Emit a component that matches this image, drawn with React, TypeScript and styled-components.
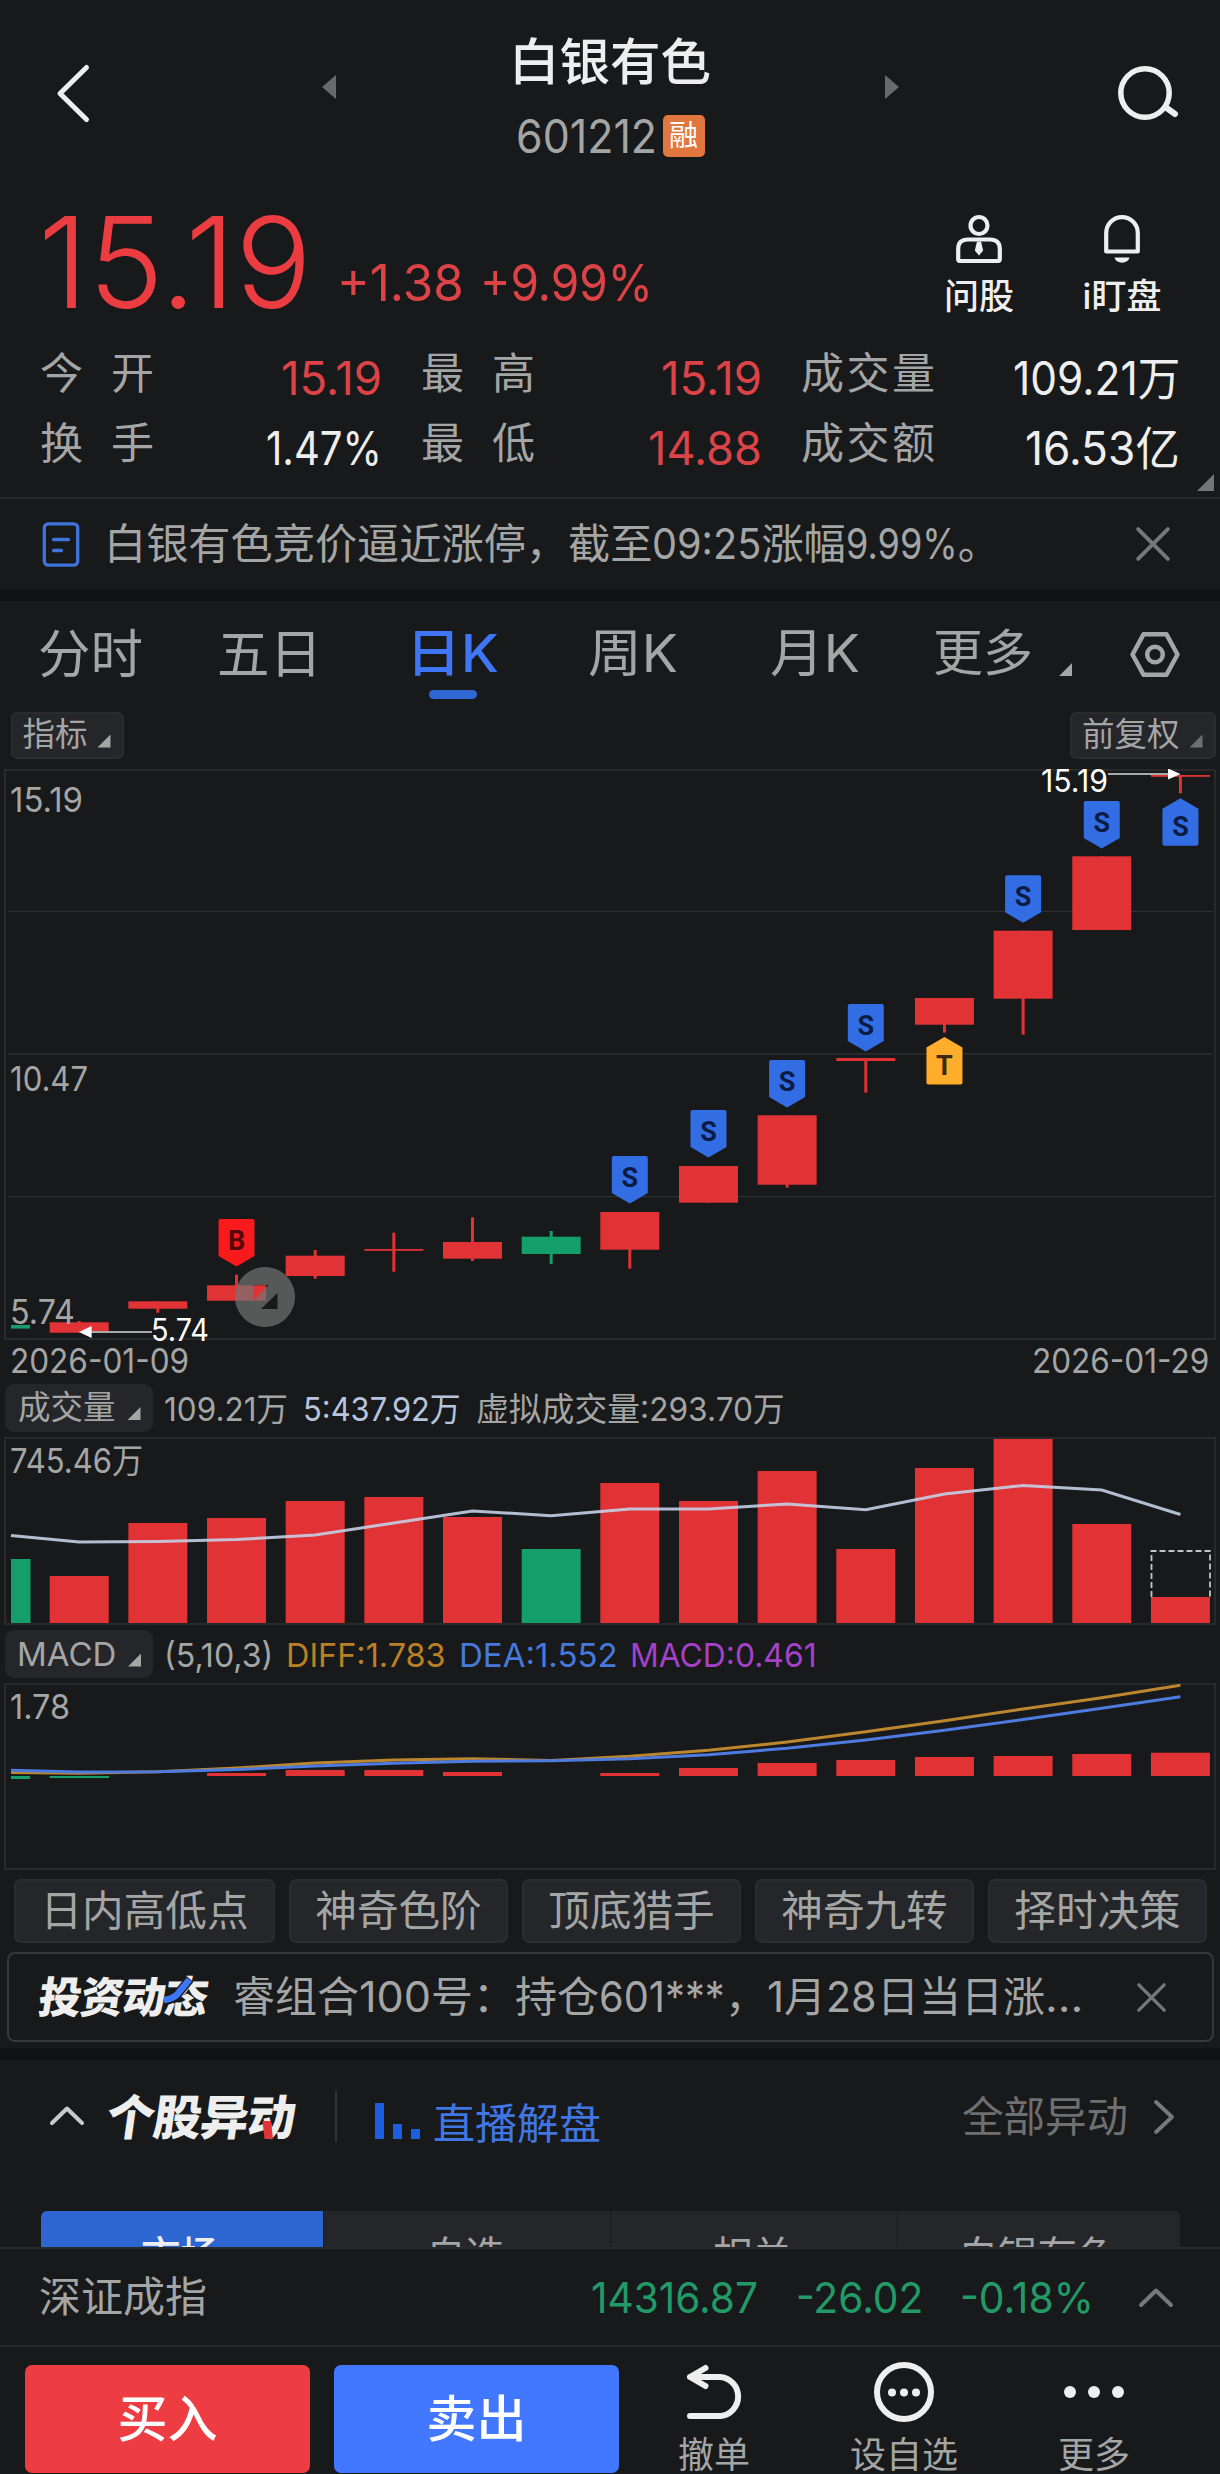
import React, { useLayoutEffect, useRef, useState } from 'react';
import styled, { createGlobalStyle } from 'styled-components';

const c = {
  bg: '#17191a',
  band: '#101113',
  line: '#27292b',
  chip: '#25262a',
  text: '#a4a5a5',
  dim: '#6e6f70',
  white: '#eeeeee',
  red: '#eb3d41',
  redText: '#dc4347',
  bar: '#e13236',
  green: '#149e69',
  greenText: '#229a68',
  blue: '#3f76f6',
};
const FONT = "Inter, 'Noto Sans CJK SC', sans-serif";

const GlobalStyle = createGlobalStyle`
  *, *::before, *::after { box-sizing: border-box; }
  body { margin: 0; background: ${c.bg}; }
`;

const Page = styled.main`
  width: 1220px;
  height: 2474px;
  overflow: hidden;
  display: flex;
  flex-direction: column;
  background: ${c.bg};
  color: ${c.text};
  font-family: ${FONT};
  line-height: 1;
  white-space: nowrap;
`;

/* ---------- text ---------- */
type LabelProps = { $size: number; $color?: string; $weight?: number; $ml?: number; $ls?: number };
const Label = styled.span<LabelProps>`
  flex: none;
  font-size: ${p => p.$size}px;
  line-height: 1;
  font-weight: ${p => p.$weight ?? 400};
  color: ${p => p.$color ?? c.text};
  margin-left: ${p => p.$ml ?? 0}px;
  letter-spacing: ${p => p.$ls ?? 0}px;
`;
const FitBox = styled.span<{ $w: number; $size: number; $color?: string; $weight?: number; $ml?: number }>`
  flex: none;
  display: block;
  width: ${p => p.$w}px;
  height: ${p => p.$size}px;
  font-size: ${p => p.$size}px;
  line-height: 1;
  font-weight: ${p => p.$weight ?? 400};
  color: ${p => p.$color ?? c.text};
  margin-left: ${p => p.$ml ?? 0}px;
`;
const FitInner = styled.span`
  display: inline-block;
  vertical-align: top;
  transform-origin: 0 50%;
`;
type FitProps = { w: number; size: number; color?: string; weight?: number; ml?: number; children: string };
/** Condenses a figure so that it fills exactly the column reserved for it. */
function Fit({ w, size, color, weight, ml, children }: FitProps) {
  const ref = useRef<HTMLSpanElement>(null);
  const [scale, setScale] = useState(1);
  useLayoutEffect(() => {
    if (ref.current) setScale(w / ref.current.offsetWidth);
  }, [w, children]);
  return (
    <FitBox $w={w} $size={size} $color={color} $weight={weight} $ml={ml}>
      <FitInner ref={ref} style={{ transform: `scaleX(${scale})` }}>{children}</FitInner>
    </FitBox>
  );
}
const Sentence = styled.div<{ $w: number; $ml: number }>`
  flex: none;
  display: flex;
  width: ${p => p.$w}px;
  margin-left: ${p => p.$ml}px;
`;

const Icon = styled.svg<{ $ml?: number }>`
  display: block;
  flex: none;
  overflow: visible;
  margin-left: ${p => p.$ml ?? 0}px;
  fill: none;
  stroke-linecap: round;
  stroke-linejoin: round;
`;
const Corner = styled.i<{ $size?: number; $color?: string; $ml?: number; $mt?: number }>`
  flex: none;
  width: ${p => p.$size ?? 13}px;
  height: ${p => p.$size ?? 13}px;
  margin-left: ${p => p.$ml ?? 0}px;
  margin-top: ${p => p.$mt ?? 0}px;
  background: ${p => p.$color ?? c.text};
  clip-path: polygon(100% 0, 100% 100%, 0 100%);
`;
const Cross = ({ w, ml }: { w: number; ml?: number }) => (
  <Icon $ml={ml} width={w} height={w} viewBox="0 0 32 32" stroke="#767778" strokeWidth="3.6">
    <path d="M2 2L30 30M30 2L2 30" />
  </Icon>
);

/* ---------- header ---------- */
const Header = styled.header`
  height: 184px;
  flex: none;
  display: flex;
  padding-left: 55px;
`;
const TitleCol = styled.div`
  width: 240px;
  margin-left: 154px;
  padding-top: 37px;
  display: flex;
  flex-direction: column;
  align-items: center;
`;
const CodeRow = styled.div`
  display: flex;
  align-items: center;
  gap: 6px;
  margin-top: 25px;
`;
const Badge = styled.span`
  width: 42px;
  height: 42px;
  border-radius: 5px;
  background: #e2763f;
  color: #fff;
  font-size: 29px;
  display: flex;
  align-items: center;
  justify-content: center;
`;
const Push = styled.div<{ $top: number; $ml?: number }>`
  padding-top: ${p => p.$top}px;
  margin-left: ${p => p.$ml ?? 0}px;
`;

/* ---------- price ---------- */
const PriceRow = styled.section`
  height: 156px;
  flex: none;
  display: flex;
  padding-left: 38px;
`;
const ToolButton = styled.button<{ $w: number; $ml: number }>`
  all: unset;
  width: ${p => p.$w}px;
  margin-left: ${p => p.$ml}px;
  padding-top: 31px;
  display: flex;
  flex-direction: column;
  align-items: center;
  gap: 15px;
`;
const Quotes = styled.section`
  height: 157px;
  flex: none;
  display: grid;
  grid-template-columns: 342px 341px 1fr;
  column-gap: 39px;
  grid-template-rows: 70px 70px;
  padding: 0 40px 0 40px;
  position: relative;
`;
const Quote = styled.div`
  display: flex;
  justify-content: space-between;
  align-items: flex-start;
`;
const QuoteKey = styled.span<{ $spread?: boolean }>`
  width: ${p => (p.$spread ? 114 : 134)}px;
  display: flex;
  justify-content: space-between;
  font-size: 43px;
  line-height: 66px;
`;
const QuoteValue = styled.div`
  padding-top: 15px;
`;
const ExpandCorner = styled(Corner)`
  position: absolute;
  right: 6px;
  bottom: 6px;
`;

/* ---------- bars and rows ---------- */
const Notice = styled.section`
  height: 92px;
  flex: none;
  display: flex;
  align-items: center;
  border-top: 2px solid ${c.line};
  padding-left: 42px;
`;
const Band = styled.div`
  height: 12px;
  flex: none;
  background: ${c.band};
`;
const Tabs = styled.nav`
  height: 111px;
  flex: none;
  display: flex;
  padding-left: 38px;
`;
const Tab = styled.div<{ $ml: number; $on?: boolean }>`
  margin-left: ${p => p.$ml}px;
  padding-top: 27px;
  display: flex;
  flex-direction: column;
  align-items: center;
  gap: 10px;
  &::after {
    content: '';
    width: 48px;
    height: 9px;
    border-radius: 5px;
    background: ${p => (p.$on ? '#2f67d3' : 'transparent')};
  }
`;
const OptionRow = styled.div`
  height: 57px;
  flex: none;
  display: flex;
  justify-content: space-between;
  padding: 0 4px 0 10.5px;
`;
const Chip = styled.div<{ $w: number; $h: number; $pl: number; $flat?: boolean }>`
  width: ${p => p.$w}px;
  height: ${p => p.$h}px;
  flex: none;
  border-radius: ${p => (p.$flat ? 9 : 6)}px;
  border: 2px solid ${p => (p.$flat ? c.chip : '#2b2c30')};
  background: ${c.chip};
  display: flex;
  align-items: center;
  padding-left: ${p => p.$pl}px;
`;
const Chart = styled.svg`
  display: block;
  flex: none;
  font-family: ${FONT};
`;
const DateRow = styled.div`
  height: 43px;
  flex: none;
  display: flex;
  justify-content: space-between;
  align-items: center;
  padding: 0 11px 4px 10px;
`;
const Legend = styled.div<{ $h: number; $pt: number }>`
  height: ${p => p.$h}px;
  padding: ${p => p.$pt}px 0 0 5px;
  flex: none;
  display: flex;
  align-items: flex-start;
`;
const LegendValues = styled.div`
  height: 51px;
  display: flex;
  align-items: center;
`;
const Tools = styled.div`
  height: 82px;
  flex: none;
  display: flex;
  gap: 14px;
  padding: 9px 0 0 14px;
`;
const Tool = styled.button<{ $w: number }>`
  all: unset;
  box-sizing: border-box;
  width: ${p => p.$w}px;
  height: 64px;
  border: 2px solid #2b2c30;
  border-radius: 7px;
  background: ${c.chip};
  font-size: 41.6px;
  text-align: center;
  line-height: 61px;
`;
const Dynamics = styled.section`
  height: 90px;
  flex: none;
  margin: 0 6px 6px 7px;
  border: 2px solid #37383a;
  border-radius: 8px;
  display: flex;
  align-items: center;
  padding: 0 0 0 30px;
`;
const Logo = styled.div<{ $size: number; $w: number; $ml?: number }>`
  position: relative;
  flex: none;
  width: ${p => p.$w}px;
  margin-left: ${p => p.$ml ?? 0}px;
  font-size: ${p => p.$size}px;
  font-weight: 900;
  letter-spacing: -1px;
  color: ${c.white};
  > span { display: inline-block; transform: skewX(-8deg); }
  > svg { position: absolute; left: 0; top: 0; }
`;
const SectionHead = styled.section`
  height: 151px;
  flex: none;
  display: flex;
  align-items: flex-start;
  padding-left: 50px;
`;
const Rule = styled.div`
  width: 2px;
  height: 51px;
  margin: 31px 0 0 39px;
  background: #323335;
`;
const Segments = styled.div`
  height: 36px;
  flex: none;
  overflow: hidden;
  margin: 0 40px 0 41px;
  display: grid;
  grid-template-columns: 282px 286px 286px 1fr;
  column-gap: 1px;
  border-radius: 6px 6px 0 0;
`;
const Segment = styled.div<{ $on?: boolean }>`
  height: 90px;
  line-height: 90px;
  text-align: center;
  text-indent: -3px;
  font-size: 39.5px;
  font-weight: ${p => (p.$on ? 500 : 400)};
  background: ${p => (p.$on ? '#2e66d1' : c.chip)};
  color: ${p => (p.$on ? c.white : c.text)};
`;
const IndexBar = styled.section`
  height: 98px;
  flex: none;
  display: flex;
  align-items: center;
  border-top: 2px solid ${c.line};
  padding: 0 0 0 39px;
`;
const ActionBar = styled.footer`
  height: 129px;
  flex: none;
  display: flex;
  border-top: 2px solid ${c.line};
  padding: 18px 0 0 25px;
`;
const TradeButton = styled.button<{ $bg: string }>`
  all: unset;
  width: 285px;
  height: 108px;
  margin-right: 24px;
  border-radius: 7px;
  background: ${p => p.$bg};
  color: #fff;
  font-size: 50px;
  font-weight: 500;
  text-align: center;
  line-height: 108px;
`;
const ActionItem = styled.div<{ $w: number; $ml: number }>`
  width: ${p => p.$w}px;
  margin-left: ${p => p.$ml}px;
  margin-top: -3px;
  display: flex;
  flex-direction: column;
  align-items: center;
  gap: 15px;
`;

/* ---------- chart data, in page pixels ---------- */
const X0 = 79.2;
const STEP = 78.66;
const BW = 59;
const cx = (i: number) => X0 + STEP * i;

type Candle = { t: number; b: number; hi?: number; lo?: number; up?: boolean };
const candles: Candle[] = [
  { t: 1322.3, b: 1332.7, hi: 1321 },
  { t: 1301.3, b: 1308.7, lo: 1312.7 },
  { t: 1285.3, b: 1300.7, hi: 1274.7 },
  { t: 1255.7, b: 1276, hi: 1250, lo: 1278.7 },
  { t: 1249, b: 1250.8, hi: 1232.7, lo: 1271.7 },
  { t: 1242, b: 1258.7, hi: 1217.3, lo: 1261 },
  { t: 1236.7, b: 1254, hi: 1231, lo: 1264, up: false },
  { t: 1212, b: 1249.7, lo: 1268.7 },
  { t: 1166, b: 1202.7 },
  { t: 1115.3, b: 1184.7, lo: 1187.7 },
  { t: 1058, b: 1061, lo: 1092.7 },
  { t: 998, b: 1024.7, lo: 1032.7 },
  { t: 930.7, b: 998.7, lo: 1034.7 },
  { t: 856.3, b: 930 },
  { t: 775, b: 776.8, lo: 793.3 },
];
const volumeTops = [1576, 1523, 1518, 1501, 1497, 1517, 1549, 1483, 1501, 1471, 1549, 1468, 1439, 1524, 1597];
const volumeMa = [1542, 1541.5, 1539.5, 1535, 1523, 1511, 1515.7, 1509, 1509, 1504, 1509.7, 1494, 1485.5, 1490, 1514.5];
const macdTops = [1776, 1776, 1773, 1770, 1770, 1772, 1776, 1773, 1768, 1763, 1760, 1757, 1756, 1754, 1752.7];
const diff = [1773.3, 1771.7, 1768, 1763, 1760, 1758.7, 1760.5, 1756.3, 1750.3, 1742, 1731.7, 1720.7, 1709, 1697.7, 1685.3];
const dea = [1772, 1771.7, 1769.5, 1766, 1763.3, 1761.3, 1760.7, 1758.7, 1754.7, 1748.3, 1740, 1730.3, 1719.5, 1708.3, 1696.7];
const line = (y0: number, ys: number[]) => [`11,${y0}`, ...ys.map((y, i) => `${cx(i)},${y}`)].join(' ');

type MarkProps = { i: number; y: number; letter: string; fill: string; ink: string; flip?: boolean };
const Mark = ({ i, y, letter, fill, ink, flip }: MarkProps) => (
  <g transform={`translate(${cx(i) - 18} ${y})`}>
    <path
      fill={fill}
      d={flip
        ? 'M18 0L36 10.5V45.5Q36 47.5 34 47.5H2Q0 47.5 0 45.5V10.5Z'
        : 'M2 0H34Q36 0 36 2V37L18 47.5L0 37V2Q0 0 2 0Z'}
    />
    <text x="18" y={flip ? 37.5 : 30.5} fontSize="27" fontWeight="700" fontFamily="Roboto, sans-serif" textAnchor="middle" fill={ink}>{letter}</text>
  </g>
);
type AxisProps = { x: number; mid: number; w: number; size?: number; fill?: string; children: string };
const Axis = ({ x, mid, w, size = 34, fill = c.text, children }: AxisProps) => (
  <text x={x} y={mid + size * 0.364} fontSize={size} fill={fill} textLength={w} lengthAdjust="spacingAndGlyphs">{children}</text>
);

const sell = { letter: 'S', fill: '#336de4', ink: '#0b1c44' };

const KLine = () => (
  <Chart width="1220" height="572" viewBox="0 769 1220 572">
    <rect x="5" y="770" width="1210" height="569" fill="none" stroke={c.line} strokeWidth="2" />
    <path d="M8 911.3H1213M8 1196.7H1213" stroke="#2d2f31" strokeWidth="1.2" />
    <path d="M8 1054H1213" stroke={c.line} strokeWidth="2" />
    <rect x="11" y="1325" width="19" height="3.6" fill={c.green} />
    {candles.map((k, i) => (
      <g key={i} fill={k.up === false ? c.green : c.bar}>
        <rect x={cx(i) - 1.5} y={k.hi ?? k.t} width="3" height={(k.lo ?? k.b) - (k.hi ?? k.t)} />
        <rect x={cx(i) - BW / 2} y={k.t} width={BW} height={k.b - k.t} />
      </g>
    ))}
    <Axis x={10} mid={799.5} w={73}>15.19</Axis>
    <Axis x={10} mid={1078.7} w={78}>10.47</Axis>
    <Axis x={10} mid={1311.7} w={65}>5.74</Axis>
    <Mark i={2} y={1219} letter="B" fill="#fa1a1c" ink="#55080c" />
    <Mark i={7} y={1156} {...sell} />
    <Mark i={8} y={1110} {...sell} />
    <Mark i={9} y={1060} {...sell} />
    <Mark i={10} y={1004} {...sell} />
    <Mark i={12} y={875.3} {...sell} />
    <Mark i={13} y={801} {...sell} />
    <Mark i={14} y={798.3} {...sell} flip />
    <Mark i={11} y={1037} letter="T" fill="#ffad2b" ink="#3b2a10" flip />
    <path d="M1108 774H1170M90 1332H152" stroke="#a9a9a9" strokeWidth="2" />
    <path d="M1180.5 774L1168 768.5V779.5ZM79 1332L91.6 1326V1338Z" fill="#fff" />
    <Axis x={1041} mid={780.5} w={67} size={31} fill="#fff">15.19</Axis>
    <Axis x={151} mid={1329.7} w={58} size={31} fill="#fff">5.74</Axis>
    <path
      fill="#737373"
      fillOpacity="0.7"
      fillRule="evenodd"
      d="M265 1267a30 30 0 1 0 0.01 0ZM253 1285H268.5L253 1301ZM277.5 1293V1309H261Z"
    />
  </Chart>
);

const Volume = () => (
  <Chart width="1220" height="188" viewBox="0 1437 1220 188">
    <rect x="5" y="1438" width="1210" height="186" fill="none" stroke={c.line} strokeWidth="2" />
    <rect x="11" y="1559" width="19.5" height="64" fill={c.green} />
    {volumeTops.map((t, i) => (
      <rect key={i} x={cx(i) - BW / 2} y={t} width={BW} height={1623 - t} fill={i === 6 ? c.green : c.bar} />
    ))}
    <path d="M1151.5 1597V1551H1210V1597" fill="none" stroke="#c4c4c4" strokeWidth="1.8" strokeDasharray="6 3" />
    <polyline points={line(1535.5, volumeMa)} fill="none" stroke="#c4cfe6" strokeOpacity="0.9" strokeWidth="3" />
    <Axis x={10} mid={1461} w={133}>745.46万</Axis>
  </Chart>
);

const Macd = () => (
  <Chart width="1220" height="187" viewBox="0 1683 1220 187">
    <rect x="5" y="1684" width="1210" height="185" fill="none" stroke={c.line} strokeWidth="2" />
    <path d="M11 1776H30V1779H11ZM49.5 1776H109V1778H49.5Z" fill={c.green} />
    {macdTops.map((t, i) => (
      <rect key={i} x={cx(i) - BW / 2} y={t} width={BW} height={1776 - t} fill={c.bar} />
    ))}
    <polyline points={line(1772.5, diff)} fill="none" stroke="#bc862f" strokeWidth="3" />
    <polyline points={line(1770.3, dea)} fill="none" stroke="#4d7be0" strokeWidth="3" />
    <Axis x={10} mid={1707} w={60}>1.78</Axis>
  </Chart>
);

const quotes = [
  { k: '今开', v: '15.19', w: 101, red: true },
  { k: '最高', v: '15.19', w: 101, red: true },
  { k: '成交量', v: '109.21万', w: 167 },
  { k: '换手', v: '1.47%', w: 116 },
  { k: '最低', v: '14.88', w: 114, red: true },
  { k: '成交额', v: '16.53亿', w: 155 },
];

export default function App() {
  return (
    <Page>
      <GlobalStyle />
      <Header>
        <Push $top={65}>
          <Icon width="34" height="57" viewBox="0 0 34 57" stroke={c.white} strokeWidth="5">
            <path d="M31.5 2.5L5 28.5L31.5 54.5" />
          </Icon>
        </Push>
        <Push $top={75} $ml={233}>
          <Icon width="14" height="24" viewBox="0 0 14 24"><path d="M14 0V24L0 12Z" fill="#69696a" /></Icon>
        </Push>
        <TitleCol>
          <Label $size={50.5} $color={c.white} $weight={500}>白银有色</Label>
          <CodeRow>
            <Fit w={141} size={46}>601212</Fit>
            <Badge>融</Badge>
          </CodeRow>
        </TitleCol>
        <Push $top={75} $ml={155}>
          <Icon width="14" height="24" viewBox="0 0 14 24"><path d="M0 0V24L14 12Z" fill="#69696a" /></Icon>
        </Push>
        <Push $top={66} $ml={219}>
          <Icon width="60" height="54" viewBox="0 0 60 54" stroke={c.white} strokeWidth="5.5">
            <circle cx="27" cy="27" r="24.2" />
            <path d="M48 41.5L57 48" strokeWidth="6" />
          </Icon>
        </Push>
      </Header>

      <PriceRow>
        <Push $top={15}><Fit w={274} size={126} weight={300} color={c.red}>15.19</Fit></Push>
        <Push $top={73} $ml={25}><Fit w={127} size={51} color={c.redText}>+1.38</Fit></Push>
        <Push $top={73} $ml={16}><Fit w={173} size={51} color={c.redText}>+9.99%</Fit></Push>
        <ToolButton $w={70} $ml={291}>
          <Icon width="46" height="49" viewBox="0 0 46 49" stroke={c.white} strokeWidth="4.2">
            <circle cx="23" cy="10.5" r="8.5" />
            <path d="M2.2 44V34Q2.2 24.5 12 24.5H34Q43.8 24.5 43.8 34V44Q43.8 46 42 46H4Q2.2 46 2.2 44Z" />
            <path d="M21 26.5H25L27.2 35.5L23 40.5L18.8 35.5Z" fill={c.white} stroke="none" />
          </Icon>
          <Label $size={35} $color={c.white} $weight={500}>问股</Label>
        </ToolButton>
        <ToolButton $w={82} $ml={67}>
          <Icon width="36" height="49" viewBox="0 0 36 49" stroke={c.white} strokeWidth="4.2">
            <path d="M2.2 36.5V18A15.8 15.8 0 0 1 33.8 18V36.5Z" />
            <path d="M10.5 42.5H25.5A7.6 6.2 0 0 1 10.5 42.5Z" fill={c.white} stroke="none" />
          </Icon>
          <Label $size={35} $color={c.white} $weight={500}>i盯盘</Label>
        </ToolButton>
      </PriceRow>

      <Quotes>
        {quotes.map(q => (
          <Quote key={q.k}>
            <QuoteKey $spread={q.k.length === 2}>{[...q.k].map(ch => <span key={ch}>{ch}</span>)}</QuoteKey>
            <QuoteValue>
              <Fit w={q.w} size={46} color={q.red ? c.redText : c.white}>{q.v}</Fit>
            </QuoteValue>
          </Quote>
        ))}
        <ExpandCorner $size={17} $color="#737475" />
      </Quotes>

      <Notice>
        <Icon width="38" height="45" viewBox="0 0 37 45" stroke="#3f74dc" strokeWidth="3.3">
          <rect x="1.8" y="1.8" width="33.4" height="41.4" rx="4" />
          <path d="M11 17.5H26M11 28.5H19" />
        </Icon>
        <Sentence $w={896} $ml={24}>
          <Label $size={42.2}>白银有色竞价逼近涨停，截至</Label>
          <Fit w={109} size={42.2}>09:25</Fit>
          <Label $size={42.2}>涨幅</Label>
          <Fit w={112} size={42.2}>9.99%</Fit>
          <Label $size={42.2}>。</Label>
        </Sentence>
        <Cross w={34} ml={136} />
      </Notice>
      <Band />

      <Tabs>
        <Tab $ml={0}><Label $size={52.5}>分时</Label></Tab>
        <Tab $ml={74}><Label $size={52.5}>五日</Label></Tab>
        <Tab $ml={84} $on><Fit w={93} size={52} weight={500} color={c.blue}>日K</Fit></Tab>
        <Tab $ml={89}><Fit w={90} size={52}>周K</Fit></Tab>
        <Tab $ml={92}><Fit w={90} size={52}>月K</Fit></Tab>
        <Tab $ml={73}><Label $size={50}>更多</Label></Tab>
        <Corner $ml={26} $mt={62} />
        <Push $top={31} $ml={58}>
          <Icon width="50" height="45" viewBox="0 0 50 45" stroke={c.text} strokeWidth="4.5">
            <path d="M13.5 2.3H36.5L47.5 22.5L36.5 42.7H13.5L2.5 22.5Z" />
            <circle cx="25" cy="22.5" r="7.8" />
          </Icon>
        </Push>
      </Tabs>

      <OptionRow>
        <Chip $w={113} $h={47} $pl={10}>
          <Label $size={32.5}>指标</Label><Corner $ml={10} $mt={11} />
        </Chip>
        <Chip $w={146} $h={47} $pl={10}>
          <Label $size={32.5}>前复权</Label><Corner $ml={10} $mt={11} $color={c.dim} />
        </Chip>
      </OptionRow>
      <KLine />

      <DateRow>
        <Fit w={179} size={34}>2026-01-09</Fit>
        <Fit w={177} size={34}>2026-01-29</Fit>
      </DateRow>
      <Legend $h={53} $pt={0}>
        <Chip $flat $w={148} $h={48} $pl={11}>
          <Label $size={32.5}>成交量</Label><Corner $ml={12} $mt={11} />
        </Chip>
        <LegendValues>
          <Fit w={124} size={33} ml={11}>109.21万</Fit>
          <Fit w={158} size={33} ml={15} color="#b7c4de">5:437.92万</Fit>
          <Label $size={32.8} $ml={15}>虚拟成交量</Label>
          <Fit w={145} size={33}>:293.70万</Fit>
        </LegendValues>
      </Legend>
      <Volume />

      <Legend $h={58} $pt={5}>
        <Chip $flat $w={148} $h={48} $pl={10}>
          <Fit w={99} size={33}>MACD</Fit><Corner $ml={12} $mt={12} />
        </Chip>
        <LegendValues>
          <Fit w={109} size={33} ml={11}>(5,10,3)</Fit>
          <Fit w={160} size={33} ml={13} color="#bb8026">DIFF:1.783</Fit>
          <Fit w={159} size={33} ml={13} color="#4778dc">DEA:1.552</Fit>
          <Fit w={187} size={33} ml={12} color="#a441c8">MACD:0.461</Fit>
        </LegendValues>
      </Legend>
      <Macd />

      <Tools>
        <Tool $w={261}>日内高低点</Tool>
        <Tool $w={219}>神奇色阶</Tool>
        <Tool $w={219}>顶底猎手</Tool>
        <Tool $w={219}>神奇九转</Tool>
        <Tool $w={219}>择时决策</Tool>
      </Tools>

      <Dynamics>
        <Logo $size={43} $w={170}>
          <span>投资动态</span>
          <svg width="170" height="43" viewBox="0 0 170 43">
            <path d="M126 24.5Q136 23 141 15L151 3" fill="none" stroke={c.bg} strokeWidth="9" />
            <path d="M125 24Q136 23 141 15L150.5 3.5" fill="none" stroke={c.blue} strokeWidth="6.5" />
          </svg>
        </Logo>
        <Sentence $w={850} $ml={24}>
          <Label $size={42}>睿组合</Label>
          <Fit w={72} size={42}>100</Fit>
          <Label $size={42}>号：持仓</Label>
          <Fit w={126} size={42}>601***</Fit>
          <Label $size={42}>，</Label>
          <Fit w={17} size={42}>1</Fit>
          <Label $size={42}>月</Label>
          <Fit w={51} size={42}>28</Fit>
          <Label $size={42}>日当日涨</Label>
          <Fit w={38} size={42}>...</Fit>
        </Sentence>
        <Cross w={29} ml={54} />
      </Dynamics>
      <Band />

      <SectionHead>
        <Push $top={46}>
          <Icon width="34" height="19" viewBox="0 0 34 19" stroke="#c9c9c9" strokeWidth="4">
            <path d="M2 17L17 2.5L32 17" />
          </Icon>
        </Push>
        <Push $top={34} $ml={23}>
          <Logo $size={48} $w={189}>
            <span>个股异动</span>
            <svg width="189" height="48" viewBox="0 0 189 48">
              <path d="M155.500 27H164L166 45H157.500Z" fill="#e03438" />
            </svg>
          </Logo>
        </Push>
        <Rule />
        <Push $top={43} $ml={38}>
          <Icon width="45" height="36" viewBox="0 0 45 36">
            <path d="M0 0H9V36H0ZM18 21H27V36H18ZM36 26H45V36H36Z" fill="#1b5fe0" />
          </Icon>
        </Push>
        <Push $top={43} $ml={13}><Label $size={42} $color="#4076e2">直播解盘</Label></Push>
        <Push $top={37} $ml={361}><Label $size={41.5} $color={c.dim}>全部异动</Label></Push>
        <Push $top={40} $ml={26}>
          <Icon width="20" height="34" viewBox="0 0 20 34" stroke="#777879" strokeWidth="3.8">
            <path d="M2 2L18 17L2 32" />
          </Icon>
        </Push>
      </SectionHead>

      <Segments>
        <Segment $on>市场</Segment>
        <Segment>自选</Segment>
        <Segment>相关</Segment>
        <Segment>白银有色</Segment>
      </Segments>

      <IndexBar>
        <Label $size={42}>深证成指</Label>
        <Fit w={167} size={43} ml={384} color={c.greenText}>14316.87</Fit>
        <Fit w={127} size={43} ml={38} color={c.greenText}>-26.02</Fit>
        <Fit w={134} size={43} ml={37} color={c.greenText}>-0.18%</Fit>
        <Icon $ml={45} width="34" height="19" viewBox="0 0 34 19" stroke="#777879" strokeWidth="4">
          <path d="M2 17L17 2.5L32 17" />
        </Icon>
      </IndexBar>

      <ActionBar>
        <TradeButton $bg="#ed3d42">买入</TradeButton>
        <TradeButton $bg="#4178ff">卖出</TradeButton>
        <ActionItem $w={72} $ml={35}>
          <Icon width="60" height="60" viewBox="684 2362 60 60" stroke={c.white} strokeWidth="6">
            <path d="M690 2377H720.5A19.6 19.6 0 0 1 720.5 2416H690M705.5 2368L690 2377L705.5 2386" />
          </Icon>
          <Label $size={36}>撤单</Label>
        </ActionItem>
        <ActionItem $w={110} $ml={99}>
          <Icon width="60" height="60" viewBox="0 0 60 60" stroke={c.white} strokeWidth="6">
            <circle cx="30" cy="30" r="27" />
            <g fill={c.white} stroke="none">
              <circle cx="18" cy="30.5" r="4" /><circle cx="30" cy="30.5" r="4" /><circle cx="42" cy="30.5" r="4" />
            </g>
          </Icon>
          <Label $size={36}>设自选</Label>
        </ActionItem>
        <ActionItem $w={72} $ml={99}>
          <Icon width="60" height="60" viewBox="0 0 60 60">
            <g fill={c.white}>
              <circle cx="6" cy="30" r="6" /><circle cx="30" cy="30" r="6" /><circle cx="54" cy="30" r="6" />
            </g>
          </Icon>
          <Label $size={36}>更多</Label>
        </ActionItem>
      </ActionBar>
    </Page>
  );
}
